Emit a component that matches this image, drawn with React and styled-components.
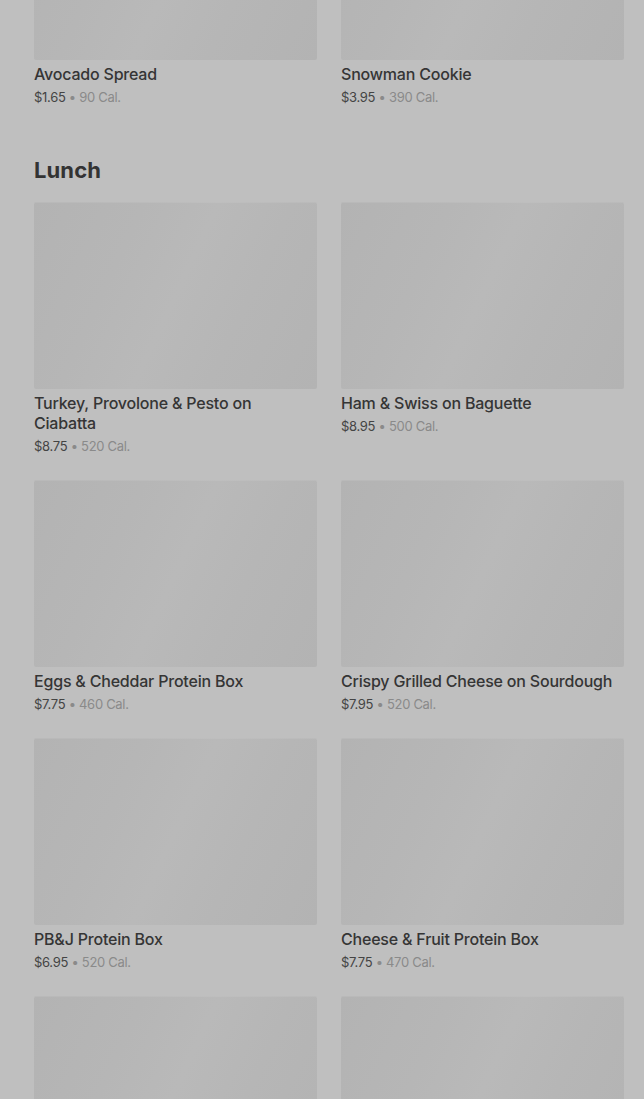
import styled, { createGlobalStyle } from "styled-components";

const GlobalStyle = createGlobalStyle`
  html, body {
    margin: 0;
    padding: 0;
    background: #bfbfbf;
    overflow: hidden;
  }
  body {
    font-family: Inter, "Noto Sans", "Liberation Sans", sans-serif;
    -webkit-font-smoothing: antialiased;
  }
`;

const menu = [
  {
    title: null,
    items: [
      { name: "Avocado Spread", price: "$1.65", cal: "90 Cal." },
      { name: "Snowman Cookie", price: "$3.95", cal: "390 Cal." },
    ],
  },
  {
    title: "Lunch",
    items: [
      { name: "Turkey, Provolone & Pesto on Ciabatta", price: "$8.75", cal: "520 Cal." },
      { name: "Ham & Swiss on Baguette", price: "$8.95", cal: "500 Cal." },
      { name: "Eggs & Cheddar Protein Box", price: "$7.75", cal: "460 Cal." },
      { name: "Crispy Grilled Cheese on Sourdough", price: "$7.95", cal: "520 Cal." },
      { name: "PB&J Protein Box", price: "$6.95", cal: "520 Cal." },
      { name: "Cheese & Fruit Protein Box", price: "$7.75", cal: "470 Cal." },
      { name: "", price: "", cal: "" },
      { name: "", price: "", cal: "" },
    ],
  },
];

const Page = styled.main`
  margin-top: -127px;
  padding: 0 20px 0 34px;
  display: flex;
  flex-direction: column;
  gap: 49px;
`;

const Section = styled.section`
  display: flex;
  flex-direction: column;
`;

const SectionTitle = styled.h2`
  margin: 0 0 18px;
  font-size: 22px;
  line-height: 28px;
  font-weight: 700;
  color: #333333;
  letter-spacing: 0.1px;
`;

const Grid = styled.div`
  display: grid;
  grid-template-columns: 1fr 1fr;
  column-gap: 24px;
  row-gap: 24px;
`;

const Card = styled.article`
  display: flex;
  flex-direction: column;
`;

const Thumb = styled.div`
  height: 187px;
  border-radius: 2px;
  background: linear-gradient(
    115deg,
    #b3b3b3 0%,
    #b6b6b6 30%,
    #b9b9b9 50%,
    #b6b6b6 70%,
    #b3b3b3 100%
  );
  box-shadow: inset 0 1px 0 rgba(255, 255, 255, 0.08);
`;

const Name = styled.h3`
  margin: 4px 0 0;
  font-size: 16px;
  line-height: 20px;
  font-weight: 500;
  letter-spacing: -0.2px;
  color: #353535;
`;

const Meta = styled.p`
  margin: 3px 0 0;
  font-size: 13px;
  line-height: 20px;
  letter-spacing: -0.3px;
  color: #8a8a8a;

  b {
    font-weight: 400;
    color: #444444;
  }
`;

function Item({ item }) {
  return (
    <Card>
      <Thumb />
      {item.name && <Name>{item.name}</Name>}
      {item.price && (
        <Meta>
          <b>{item.price}</b> • {item.cal}
        </Meta>
      )}
    </Card>
  );
}

export default function App() {
  return (
    <>
      <GlobalStyle />
      <Page>
        {menu.map((section, i) => (
          <Section key={i}>
            {section.title && <SectionTitle>{section.title}</SectionTitle>}
            <Grid>
              {section.items.map((item, j) => (
                <Item key={j} item={item} />
              ))}
            </Grid>
          </Section>
        ))}
      </Page>
    </>
  );
}
